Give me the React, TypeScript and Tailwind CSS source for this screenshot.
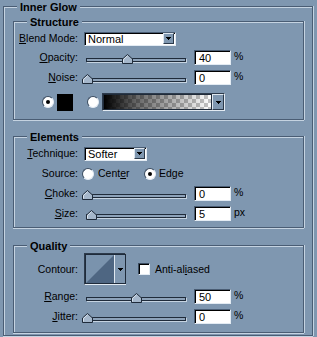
import type { ReactNode } from 'react';

type GroupProps = {
  title: string;
  className?: string;
  bodyClass?: string;
  children: ReactNode;
};

const Group = ({ title, className = '', bodyClass = '', children }: GroupProps) => (
  <div className={className}>
    <div className="flex h-[12px] items-end">
      <div className="h-[6px] w-[14px] border-l border-t border-[#4a5d74] shadow-[inset_1px_1px_0_#c5d3e1]" />
      <span className="mt-[1px] self-start px-[3px] text-[11px] font-bold leading-[12px]">{title}</span>
      <div className="h-[6px] flex-1 border-r border-t border-[#4a5d74] shadow-[inset_0_1px_0_#c5d3e1,1px_0_0_#c5d3e1]" />
    </div>
    <div
      className={
        'border-x border-b border-[#4a5d74] shadow-[inset_1px_0_0_#c5d3e1,1px_0_0_#c5d3e1,0_1px_0_#c5d3e1] ' + bodyClass
      }
    >
      {children}
    </div>
  </div>
);

const Label = ({ children }: { children: ReactNode }) => (
  <span className="w-[64px] shrink-0 text-right leading-[13px]">{children}</span>
);

const Arrow = () => (
  <svg width="5" height="3" viewBox="0 0 5 3" className="block">
    <path d="M0 0h5v1h-1v1h-1v1h-1v-1h-1v-1h-1z" fill="#000" />
  </svg>
);

const DropButton = ({ className = '' }: { className?: string }) => (
  <div
    className={
      'flex shrink-0 items-center justify-center border border-b-[#2c3a4b] border-l-[#dfe7ef] border-r-[#2c3a4b] border-t-[#dfe7ef] bg-[#7f97b0] ' +
      className
    }
  >
    <Arrow />
  </div>
);

const Select = ({ value, className }: { value: string; className: string }) => (
  <div
    className={
      'ml-[6px] flex h-[14px] items-center border border-b-[#e3ebf3] border-l-[#4a5d74] border-r-[#e3ebf3] border-t-[#4a5d74] bg-white pl-[3px] pr-[1px] shadow-[inset_1px_1px_0_#000] ' +
      className
    }
  >
    <span className="flex-1 text-[11px] leading-[12px]">{value}</span>
    <DropButton className="h-[11px] w-[11px]" />
  </div>
);

const Slider = ({ pos, className = 'ml-[8px]' }: { pos: number; className?: string }) => (
  <div className={'relative h-[15px] w-[100px] shrink-0 ' + className}>
    <div className="mt-[8px] h-[4px] border border-[#1f2b3a] bg-[#8da2b9] shadow-[1px_1px_0_#c5d3e1]" />
    <svg
      className="absolute top-[4px]"
      style={{ left: pos - 4 }}
      width="11"
      height="10"
      viewBox="0 0 11 10"
    >
      <path d="M0.5 9.5V5L5.5 0.5L10.5 5V9.5Z" fill="#a5b7cb" stroke="#1f2b3a" />
      <path d="M1.5 8.5V5.4L5.5 1.8" fill="none" stroke="#dbe4ee" />
    </svg>
  </div>
);

const NumField = ({ value, unit, className = 'ml-[8px]' }: { value: string; unit: string; className?: string }) => (
  <>
    <div
      className={
        'flex h-[15px] w-[37px] shrink-0 items-center border border-b-[#e3ebf3] border-l-[#4a5d74] border-r-[#e3ebf3] border-t-[#4a5d74] bg-white pl-[4px] text-[11px] leading-[12px] shadow-[inset_1px_1px_0_#000] ' +
        className
      }
    >
      {value}
    </div>
    <span className="ml-[3px] self-start leading-[12px]">{unit}</span>
  </>
);

const Radio = ({ on }: { on?: boolean }) => (
  <div className="flex h-[12px] w-[12px] shrink-0 items-center justify-center rounded-full border border-b-[#e3ebf3] border-l-[#3a4b5f] border-r-[#e3ebf3] border-t-[#3a4b5f] bg-white">
    {on && <div className="h-[4px] w-[4px] rounded-full bg-black" />}
  </div>
);

const SliderRow = ({
  label,
  pos,
  value,
  unit,
  className = '',
}: {
  label: ReactNode;
  pos: number;
  value: string;
  unit: string;
  className?: string;
}) => (
  <div className={'flex h-[15px] items-center ' + className}>
    <Label>{label}</Label>
    <Slider pos={pos} />
    <NumField value={value} unit={unit} />
  </div>
);

export default function App() {
  return (
    <div className="h-[337px] w-[317px] bg-[#7f97b0] pl-[3px] font-['Liberation_Sans',Arial,sans-serif] text-[10.5px] text-black">
      <Group title="Inner Glow" className="w-[310px]" bodyClass="pl-[9px] pt-[3px] pb-[2px]">
        <Group title="Structure" className="w-[291px]" bodyClass="pt-[4px] pb-[8px]">
          <div className="flex h-[15px] items-center">
            <Label>
              <u>B</u>lend Mode:
            </Label>
            <Select value="Normal" className="w-[92px]" />
          </div>
          <SliderRow
            className="mt-[4px]"
            label={
              <>
                <u>O</u>pacity:
              </>
            }
            pos={40}
            value="40"
            unit="%"
          />
          <SliderRow
            className="mt-[5px]"
            label={
              <>
                <u>N</u>oise:
              </>
            }
            pos={0}
            value="0"
            unit="%"
          />
          <div className="mt-[8px] flex h-[18px] items-center pl-[28px]">
            <Radio on />
            <div className="ml-[3px] h-[17px] w-[16px] bg-black" />
            <div className="ml-[14px]">
              <Radio />
            </div>
            <div className="ml-[3px] flex h-[18px] w-[123px] border border-b-[#e3ebf3] border-l-[#2c3a4b] border-r-[#e3ebf3] border-t-[#2c3a4b]">
              <div className="flex-1 border border-[#1f2b3a] bg-[linear-gradient(to_right,#000_0%,rgba(0,0,0,0.6)_30%,rgba(0,0,0,0)_100%),repeating-conic-gradient(#c4c4c4_0_25%,#ffffff_0_50%)] bg-[length:100%_100%,8px_8px]" />
              <DropButton className="h-full w-[12px]" />
            </div>
          </div>
        </Group>

        <Group title="Elements" className="mt-[10px] w-[291px]" bodyClass="pt-[4px] pb-[6px]">
          <div className="flex h-[15px] items-center">
            <Label>
              <u>T</u>echnique:
            </Label>
            <Select value="Softer" className="w-[63px]" />
          </div>
          <div className="mt-[5px] flex h-[15px] items-center">
            <Label>Source:</Label>
            <div className="ml-[4px]">
              <Radio />
            </div>
            <span className="ml-[4px] w-[46px] leading-[13px]">
              Cent<u>e</u>r
            </span>
            <Radio on />
            <span className="ml-[3px] leading-[13px]">
              Ed<u>g</u>e
            </span>
          </div>
          <SliderRow
            className="mt-[5px]"
            label={
              <>
                <u>C</u>hoke:
              </>
            }
            pos={0}
            value="0"
            unit="%"
          />
          <SliderRow
            className="mt-[5px]"
            label={
              <>
                <u>S</u>ize:
              </>
            }
            pos={4}
            value="5"
            unit="px"
          />
        </Group>

        <Group title="Quality" className="mt-[11px] w-[291px]" bodyClass="pt-[2px] pb-[8px]">
          <div className="flex h-[32px] items-center">
            <Label>Contour:</Label>
            <div className="ml-[6px] flex h-[32px] w-[42px] border border-b-[#e3ebf3] border-l-[#2c3a4b] border-r-[#e3ebf3] border-t-[#2c3a4b]">
              <div className="flex flex-1 border border-[#1f2b3a]">
                <svg className="block flex-1" viewBox="0 0 28 28" preserveAspectRatio="none">
                  <rect width="28" height="28" fill="#7a93ad" />
                  <path d="M0 28L28 0V28Z" fill="#4e6682" />
                </svg>
                <DropButton className="w-[11px] border-y-0 border-r-0 border-l-[#1f2b3a]" />
              </div>
            </div>
            <div className="ml-[12px] h-[12px] w-[12px] border border-b-[#e3ebf3] border-l-[#3a4b5f] border-r-[#e3ebf3] border-t-[#3a4b5f] bg-white shadow-[inset_1px_1px_0_#000]" />
            <span className="ml-[5px] leading-[13px]">
              Anti-al<u>i</u>ased
            </span>
          </div>
          <SliderRow
            className="mt-[4px]"
            label={
              <>
                <u>R</u>ange:
              </>
            }
            pos={49}
            value="50"
            unit="%"
          />
          <SliderRow
            className="mt-[5px]"
            label={
              <>
                <u>J</u>itter:
              </>
            }
            pos={0}
            value="0"
            unit="%"
          />
        </Group>
      </Group>
    </div>
  );
}
